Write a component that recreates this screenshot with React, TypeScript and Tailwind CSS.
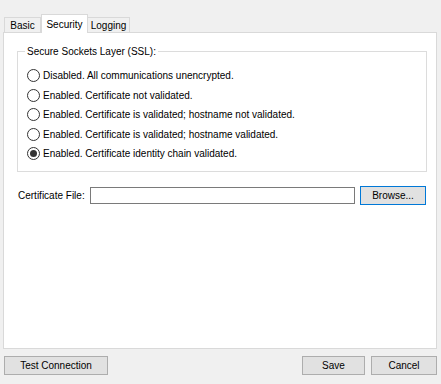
import { useState } from "react";

const options = [
  "Disabled. All communications unencrypted.",
  "Enabled. Certificate not validated.",
  "Enabled. Certificate is validated; hostname not validated.",
  "Enabled. Certificate is validated; hostname validated.",
  "Enabled. Certificate identity chain validated.",
];

function Radio({ checked }: { checked: boolean }) {
  return (
    <span className="w-[13px] h-[13px] rounded-full border border-[#333] bg-white flex items-center justify-center shrink-0">
      {checked && <span className="w-[7px] h-[7px] rounded-full bg-[#333]" />}
    </span>
  );
}

function WinButton({ label, className, focused }: { label: string; className: string; focused?: boolean }) {
  return (
    <button
      className={`h-[19px] bg-[#e1e1e1] border ${focused ? "border-[#0078d7]" : "border-[#adadad]"} text-[10px] text-black flex items-center justify-center ${className}`}
    >
      {label}
    </button>
  );
}

export default function App() {
  const [selected, setSelected] = useState(4);

  return (
    <div className="w-[441px] h-[384px] bg-[#f0f0f0] flex flex-col pt-[13px] pl-[3px] pr-[4px] font-['Liberation_Sans',Arial,sans-serif] text-[10px] text-black overflow-hidden">
      <div className="flex items-end pl-[1px] h-[19px]">
        <div className="w-[37px] h-[15px] border border-b-0 border-[#d9d9d9] bg-[#f0f0f0] flex items-center justify-center">
          Basic
        </div>
        <div className="relative z-10 w-[47px] h-[19px] -mb-px border border-b-0 border-[#d9d9d9] bg-white flex items-start justify-center pt-[2px]">
          Security
        </div>
        <div className="w-[42px] h-[15px] border border-b-0 border-l-0 border-[#d9d9d9] bg-[#f0f0f0] flex items-center justify-center">
          Logging
        </div>
      </div>

      <div className="h-[317px] bg-white border border-[#d9d9d9] flex flex-col pl-[13px] pr-[9px] pt-[11px]">
        <fieldset className="border border-[#dcdcdc] h-[128px] pl-[9px] pt-[7px]">
          <legend className="ml-[-2px] px-[2px]">Secure Sockets Layer (SSL):</legend>
          <div className="flex flex-col">
            {options.map((opt, i) => (
              <label
                key={opt}
                className="h-[19.5px] flex items-center gap-[3px] cursor-default"
                onClick={() => setSelected(i)}
              >
                <Radio checked={selected === i} />
                <span>{opt}</span>
              </label>
            ))}
          </div>
        </fieldset>

        <div className="flex items-center mt-[14px] h-[19px]">
          <span className="w-[73px] pl-[1px] whitespace-nowrap">Certificate File:</span>
          <div className="w-[265px] h-[17px] border border-[#7a7a7a] bg-white" />
          <WinButton label="Browse..." className="ml-[5px] w-[66px]" focused />
        </div>
      </div>

      <div className="flex items-center mt-[7px] pl-[1px]">
        <WinButton label="Test Connection" className="w-[104px]" />
        <WinButton label="Save" className="ml-auto w-[63px]" />
        <WinButton label="Cancel" className="ml-[6px] w-[66px]" />
      </div>
    </div>
  );
}
